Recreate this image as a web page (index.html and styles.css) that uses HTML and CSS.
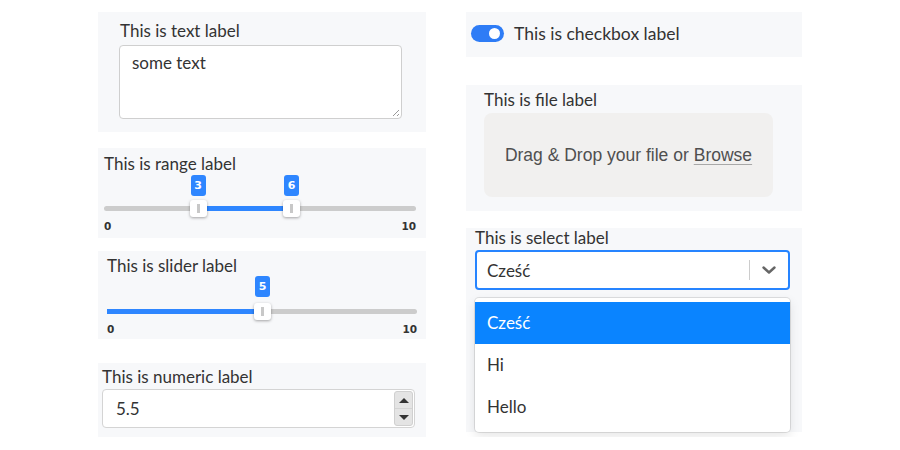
FILE: index.html
```html
<!DOCTYPE html>
<html>
<head>
<meta charset="utf-8">
<link rel="stylesheet" href="styles.css">
</head>
<body>
<div class="page">
  <div class="col col-left">
    <div class="box box-text">
      <div class="label">This is text label</div>
      <div class="textarea">some text<span class="grip"></span></div>
    </div>

    <div class="box box-range">
      <div class="label">This is range label</div>
      <div class="slider">
        <div class="track">
          <div class="fill" style="left:30%;width:30%"></div>
          <div class="handle" style="left:30%"><span class="tip">3</span></div>
          <div class="handle" style="left:60%"><span class="tip">6</span></div>
        </div>
        <div class="scale"><span>0</span><span>10</span></div>
      </div>
    </div>

    <div class="box box-slider">
      <div class="label">This is slider label</div>
      <div class="slider">
        <div class="track">
          <div class="fill" style="left:0;width:50%"></div>
          <div class="handle" style="left:50%"><span class="tip">5</span></div>
        </div>
        <div class="scale"><span>0</span><span>10</span></div>
      </div>
    </div>

    <div class="box box-numeric">
      <div class="label">This is numeric label</div>
      <div class="numeric">
        <span class="num-value">5.5</span>
        <span class="spinner">
          <span class="spin-up"></span>
          <span class="spin-down"></span>
        </span>
      </div>
    </div>
  </div>

  <div class="col col-right">
    <div class="box box-toggle">
      <span class="toggle"><span class="knob"></span></span>
      <span class="toggle-label">This is checkbox label</span>
    </div>

    <div class="box box-file">
      <div class="label">This is file label</div>
      <div class="drop">Drag &amp; Drop your file or <span class="browse">Browse</span></div>
    </div>

    <div class="box box-select">
      <div class="label">This is select label</div>
      <div class="select">
        <span class="select-value">Cześć</span>
        <span class="sep"></span>
        <svg class="chev" width="20" height="20" viewBox="0 0 20 20"><path d="M4.5 7.5 L10 12.5 L15.5 7.5" fill="none" stroke="#666" stroke-width="2.4" stroke-linecap="round" stroke-linejoin="round"/></svg>
      </div>
      <div class="menu">
        <div class="option active">Cześć</div>
        <div class="option">Hi</div>
        <div class="option">Hello</div>
      </div>
    </div>
  </div>
</div>
</body>
</html>
```

FILE: styles.css
```css
* { box-sizing: border-box; }
body {
  margin: 0;
  background: #ffffff;
  font-family: Lato, "Noto Sans", sans-serif;
  font-size: 17px;
  color: #333333;
}
.page {
  display: flex;
  justify-content: center;
  gap: 40px;
  padding-top: 12px;
}
.col { display: flex; flex-direction: column; }
.col-left { width: 328px; }
.col-right { width: 336px; }
.box { background: #f7f8fa; }
.label { line-height: 20px; }

/* text */
.box-text { height: 120px; padding: 9px 24px 0 22px; }
.textarea {
  position: relative;
  margin-top: 4px;
  margin-left: -1px;
  width: 283px;
  height: 74px;
  background: #fff;
  border: 1px solid #cfcfcf;
  border-radius: 4px;
  padding: 7px 12px;
  line-height: 20px;
}
.grip {
  position: absolute;
  right: 2px;
  bottom: 2px;
  width: 9px;
  height: 9px;
  background: repeating-linear-gradient(135deg, transparent 0 2px, #999 2px 3px);
  clip-path: polygon(100% 0, 100% 100%, 0 100%);
}

/* sliders */
.box-range { margin-top: 16px; height: 90px; padding: 6px 10px 0 6px; }
.box-slider { margin-top: 13px; height: 88px; padding: 5px 9px 0 9px; }
.slider { position: relative; }
.box-range .slider { margin-top: 32px; }
.box-slider .slider { margin-top: 33px; }
.track {
  position: relative;
  height: 5px;
  border-radius: 3px;
  background: #cccccc;
}
.fill {
  position: absolute;
  top: 0;
  height: 5px;
  background: #2e86ff;
}
.handle {
  position: absolute;
  top: -6px;
  width: 17px;
  height: 17px;
  margin-left: -8px;
  background: #fff;
  border-radius: 3px;
  box-shadow: 0 1px 3px rgba(0,0,0,0.35);
}
.handle::after {
  content: "";
  position: absolute;
  left: 7px;
  top: 4px;
  width: 3px;
  height: 9px;
  background: #c8c8c8;
}
.tip {
  position: absolute;
  left: 1px;
  top: -25px;
  width: 15px;
  height: 21px;
  border-radius: 3px;
  background: #2e86ff;
  color: #fff;
  font-family: "DejaVu Sans", sans-serif;
  font-weight: bold;
  font-size: 11px;
  line-height: 21px;
  text-align: center;
}
.box-slider .tip { top: -27px; }
.scale {
  display: flex;
  justify-content: space-between;
  margin-top: 9px;
  font-family: "DejaVu Sans", sans-serif;
  font-weight: bold;
  font-size: 10.5px;
  line-height: 12px;
  color: #333;
}

/* numeric */
.box-numeric { margin-top: 24px; height: 74px; padding: 4px 11px 0 4px; }
.numeric {
  position: relative;
  margin-top: 2px;
  height: 39px;
  background: #fff;
  border: 1px solid #d4d4d4;
  border-radius: 4px;
  display: flex;
  align-items: center;
  padding-left: 13px;
}
.spinner {
  position: absolute;
  right: 1px;
  top: 1px;
  bottom: 1px;
  width: 19px;
  background: #e4e4e4;
  border: 1px solid #d0d0d0;
  border-radius: 3px;
  display: flex;
  flex-direction: column;
}
.spin-up, .spin-down {
  flex: 1;
  display: flex;
  align-items: center;
  justify-content: center;
}
.spin-up { border-bottom: 1px solid #d4d4d4; }
.spin-up::after {
  content: "";
  border-left: 5px solid transparent;
  border-right: 5px solid transparent;
  border-bottom: 5px solid #333;
}
.spin-down::after {
  content: "";
  border-left: 5px solid transparent;
  border-right: 5px solid transparent;
  border-top: 5px solid #333;
}

/* toggle */
.box-toggle {
  height: 45px;
  display: flex;
  align-items: center;
  padding-left: 5px;
  padding-bottom: 3px;
}
.toggle {
  width: 33px;
  height: 17px;
  border-radius: 9px;
  background: #2e7cf6;
  position: relative;
  margin-right: 10px;
}
.knob {
  position: absolute;
  right: 4px;
  top: 3px;
  width: 11px;
  height: 11px;
  border-radius: 50%;
  background: #fff;
}
.toggle-label { font-size: 17.5px; }

/* file */
.box-file { margin-top: 28px; height: 126px; padding: 5px 29px 0 18px; }
.drop {
  margin-top: 3px;
  height: 84px;
  background: #f1f0ef;
  border-radius: 8px;
  display: flex;
  align-items: center;
  justify-content: center;
  font-family: "Liberation Sans", Arial, sans-serif;
  font-size: 17.5px;
  color: #4f4f4f;
}
.browse {
  margin-left: 5px;
  text-decoration: underline;
  text-decoration-color: #a8a8a8;
  text-underline-offset: 3px;
}

/* select */
.box-select { margin-top: 17px; height: 204px; padding: 0 12px 0 9px; }
.select {
  margin-top: 2px;
  height: 40px;
  border: 2px solid #2684ff;
  border-radius: 4px;
  background: #fff;
  display: flex;
  align-items: center;
  padding-left: 10px;
}
.select-value { flex: 1; }
.sep {
  width: 1px;
  height: 20px;
  background: #cccccc;
}
.chev { margin: 0 9px 0 9px; }
.menu {
  margin-top: 8px;
  background: #fff;
  border-radius: 4px;
  box-shadow: 0 0 0 1px rgba(0,0,0,0.1), 0 4px 11px rgba(0,0,0,0.1);
  padding: 4px 0;
}
.option {
  height: 42px;
  line-height: 42px;
  padding-left: 12px;
}
.option.active { background: #0a84ff; color: #fff; }
```
